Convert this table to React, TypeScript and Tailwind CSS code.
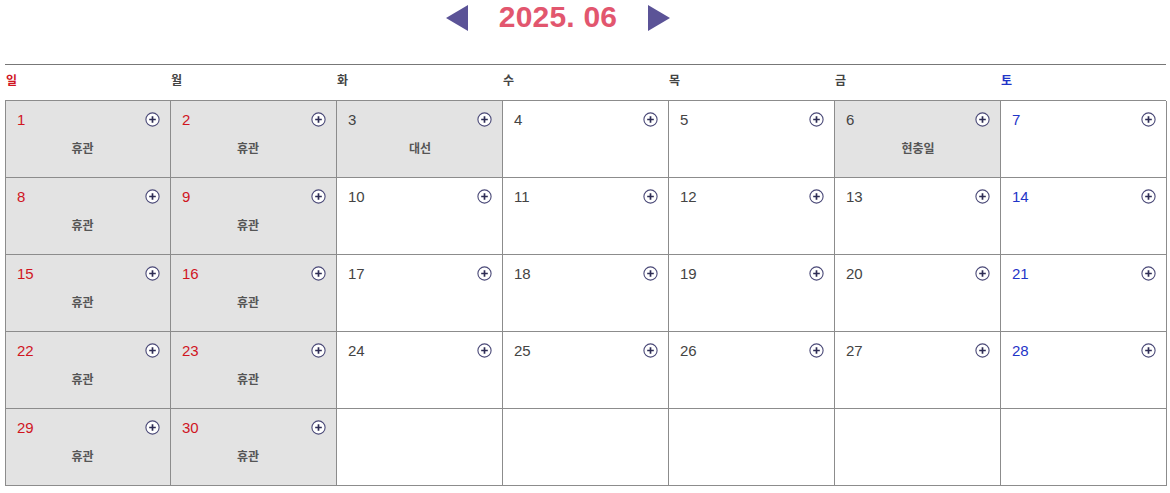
const weekdays = [
  { label: "일", color: "text-[#d0151f]" },
  { label: "월", color: "text-[#444]" },
  { label: "화", color: "text-[#444]" },
  { label: "수", color: "text-[#444]" },
  { label: "목", color: "text-[#444]" },
  { label: "금", color: "text-[#444]" },
  { label: "토", color: "text-[#1f35c8]" },
];

type Day = { n: number; note?: string; red?: boolean; grey?: boolean } | null;

const closed = [1, 2, 8, 9, 15, 16, 22, 23, 29, 30];

const days: Day[] = Array.from({ length: 35 }, (_, i) => {
  const n = i + 1;
  if (n > 30) return null;
  if (closed.includes(n)) return { n, note: "휴관", red: true, grey: true };
  if (n === 3) return { n, note: "대선", grey: true };
  if (n === 6) return { n, note: "현충일", grey: true };
  return { n };
});

function PlusIcon() {
  return (
    <svg width="15" height="15" viewBox="0 0 15 15" className="block">
      <circle cx="7.5" cy="7.5" r="6.6" fill="#fff" stroke="#4b4a78" strokeWidth="1.1" />
      <path d="M7.5 4.2v6.6M4.2 7.5h6.6" stroke="#2e2d55" strokeWidth="1.7" />
    </svg>
  );
}

function Cell({ d, col }: { d: Day; col: number }) {
  if (!d) return <div className="h-[77px] border-r border-b border-[#8c8c8c] bg-white" />;
  const numColor = d.red
    ? "text-[#d0151f]"
    : col === 6
      ? "text-[#1f35c8]"
      : "text-[#444]";
  return (
    <div
      className={`h-[77px] border-r border-b border-[#8c8c8c] pl-[11px] pr-[10px] pt-[10px] ${d.grey ? "bg-[#e3e3e3]" : "bg-white"}`}
    >
      <div className="flex items-start justify-between">
        <span className={`text-[15px] leading-[18px] ${numColor}`}>{d.n}</span>
        <span className="mt-[1px]">
          <PlusIcon />
        </span>
      </div>
      {d.note && (
        <div
          className={`mt-[13px] text-center text-[12px] font-bold leading-[14px] text-[#555] ${d.note === "휴관" ? "pr-[12px]" : ""}`}
        >
          {d.note}
        </div>
      )}
    </div>
  );
}

export default function App() {
  return (
    <main className="min-h-screen bg-white font-['Liberation_Sans','Noto_Sans_CJK_KR',sans-serif]">
      {/* Month nav */}
      <div className="flex h-[64px] items-start justify-center pr-[54px]">
        <div className="flex items-center gap-[31px]">
          <svg width="22" height="26" viewBox="0 0 22 26" className="mt-[1px]">
            <path d="M22 0v26L0 13z" fill="#5b5397" />
          </svg>
          <span className="text-[30px] font-bold leading-[34px] tracking-[0.2px] text-[#e2566e]">2025. 06</span>
          <svg width="22" height="26" viewBox="0 0 22 26" className="mt-[1px]">
            <path d="M0 0v26l22-13z" fill="#5b5397" />
          </svg>
        </div>
      </div>

      <div className="ml-[5px] w-[1161px]">
        {/* Weekday header */}
        <div className="grid h-[36px] grid-cols-[165px_166px_166px_166px_166px_166px_166px] border-t border-[#777]">
          {weekdays.map((w) => (
            <div key={w.label} className={`pt-[8px] pl-[1px] text-[12px] font-bold leading-[16px] ${w.color}`}>
              {w.label}
            </div>
          ))}
        </div>

        {/* Days */}
        <div className="grid grid-cols-[165px_166px_166px_166px_166px_166px_166px] border-l border-t border-[#8c8c8c]">
          {days.map((d, i) => (
            <Cell key={i} d={d} col={i % 7} />
          ))}
        </div>
      </div>
    </main>
  );
}
